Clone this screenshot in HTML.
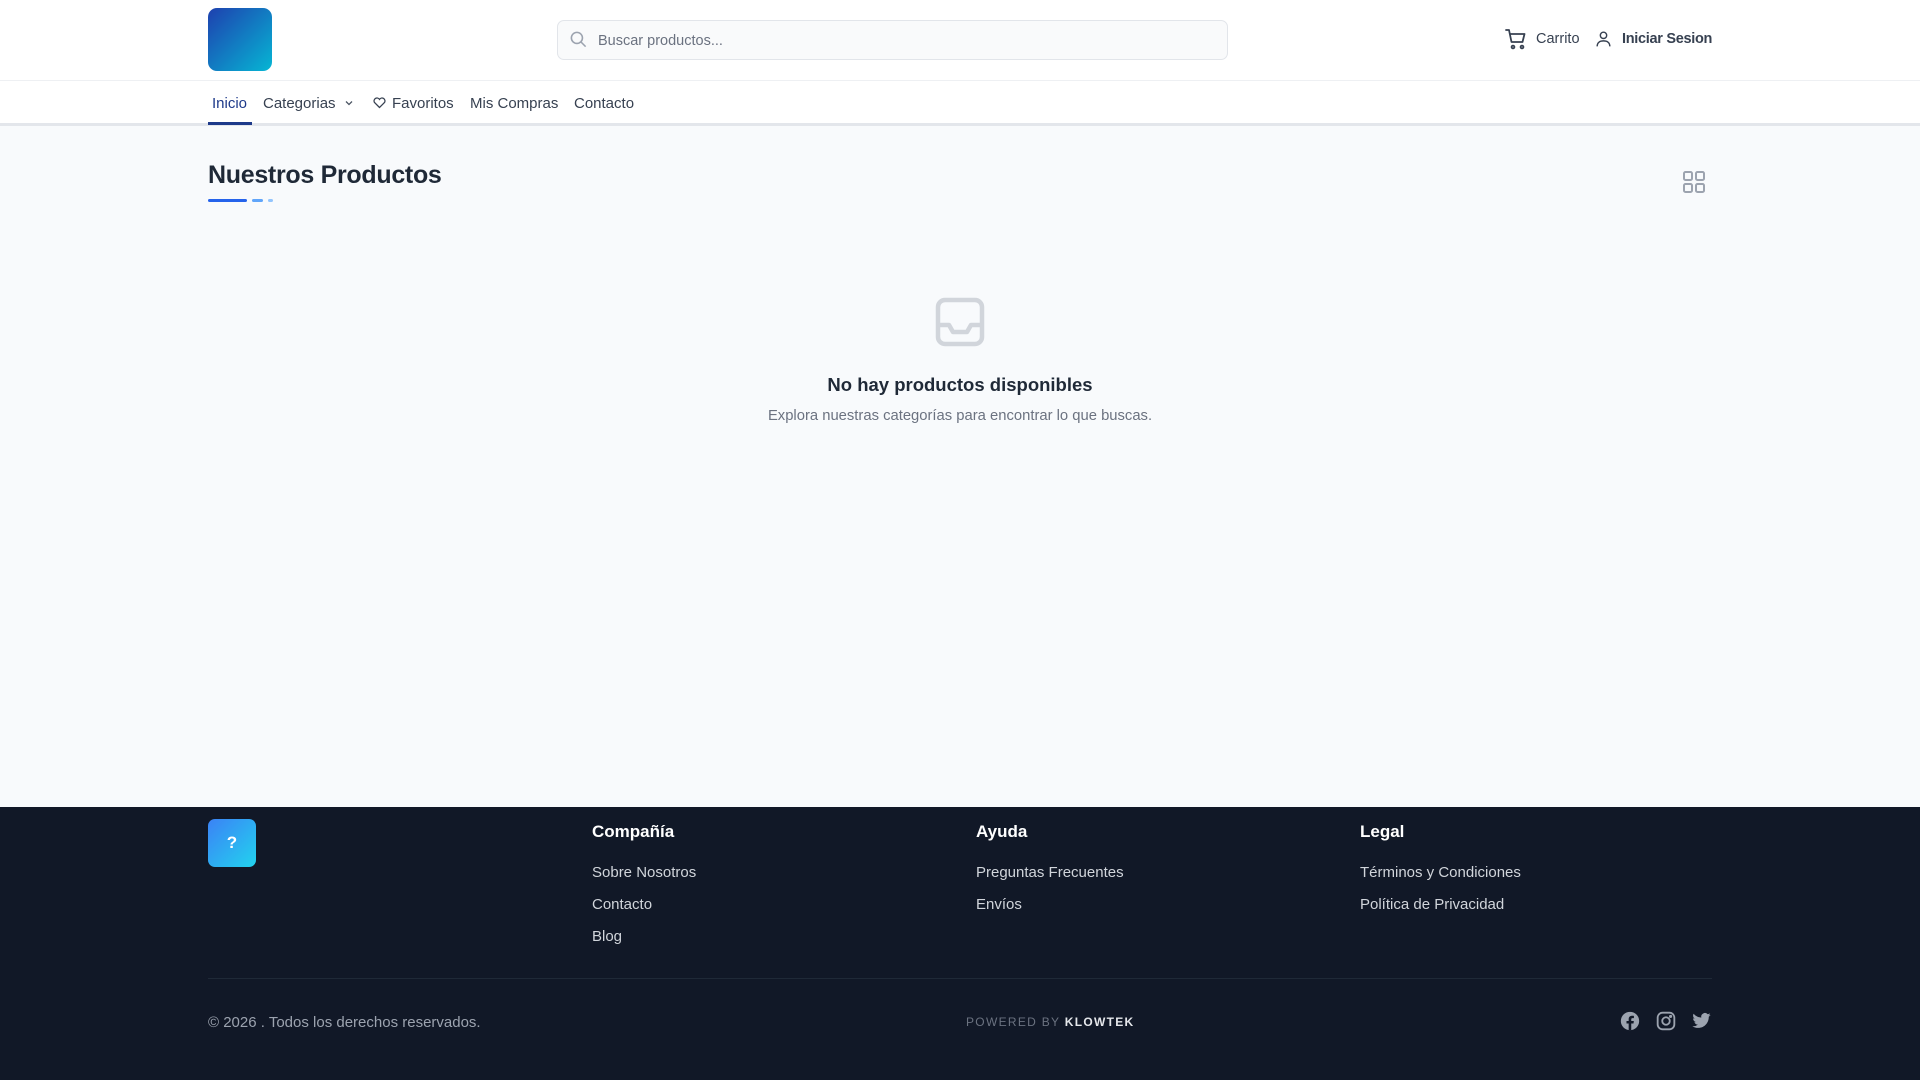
<!DOCTYPE html>
<html><head><meta charset="utf-8"><style>
*{box-sizing:border-box;margin:0;padding:0}
body{width:1920px;height:1080px;overflow:hidden;font-family:"Liberation Sans",sans-serif;background:#f8fafc;position:relative;color:#1f2937}
.abs{position:absolute}
header{position:absolute;left:0;top:0;width:1920px;height:81px;background:#fff;border-bottom:1px solid #eef0f3}
nav{position:absolute;left:0;top:81px;width:1920px;height:45px;background:#fff;border-bottom:3px solid #e3e6eb}
.nav{position:absolute;top:95px;font-size:15px;color:#374151}
footer{position:absolute;left:0;top:807px;width:1920px;height:273px;background:#111827}
.fh{position:absolute;top:822px;color:#fff;font-size:17px;font-weight:bold}
.fl{position:absolute;color:#d1d5db;font-size:15px}
</style></head><body>
<header>
<div class="abs" style="left:208px;top:8px;width:64px;height:63px;border-radius:9px;background:linear-gradient(135deg,#1e40af,#06b6d4)"></div>
<div class="abs" style="left:557px;top:20px;width:671px;height:40px;border:1px solid #e2e5ea;border-radius:7px;background:#f9fafb"></div>
<svg class="abs" style="left:569px;top:30px" width="19" height="19" viewBox="0 0 24 24" fill="none" stroke="#9ca3af" stroke-width="2"><circle cx="10" cy="10" r="7"/><path d="M15 15l6 6"/></svg>
<div class="abs" style="left:598px;top:33px;font-size:14.5px;color:#6b7280">Buscar productos...</div>
<svg class="abs" style="left:1504px;top:27px" width="24" height="24" viewBox="0 0 24 24" fill="none" stroke="#374151" stroke-width="1.8" stroke-linecap="round" stroke-linejoin="round"><path d="M2 3h3l2.5 12h11l2-8H6.5"/><circle cx="9" cy="20" r="1.4"/><circle cx="18" cy="20" r="1.4"/></svg>
<div class="abs" style="left:1536px;top:31px;font-size:14.5px;color:#374151">Carrito</div>
<svg class="abs" style="left:1594px;top:29px" width="19" height="19" viewBox="0 0 24 24" fill="none" stroke="#374151" stroke-width="1.8"><circle cx="12" cy="8" r="4"/><path d="M4 22c0-5 3.5-7 8-7s8 2 8 7"/></svg>
<div class="abs" style="left:1622px;top:31px;font-size:14.5px;color:#374151;font-weight:bold;letter-spacing:-0.3px">Iniciar Sesion</div>
</header>
<nav></nav>
<div class="nav" style="left:212px;color:#1e3a8a">Inicio</div>
<div class="abs" style="left:208px;top:122px;width:44px;height:3px;background:#1e3a8a"></div>
<div class="nav" style="left:263px">Categorias</div>
<svg class="abs" style="left:343px;top:97px" width="12" height="12" viewBox="0 0 24 24" fill="none" stroke="#4b5563" stroke-width="2.5"><path d="M6 9l6 6 6-6"/></svg>
<svg class="abs" style="left:372px;top:95px" width="15" height="15" viewBox="0 0 24 24" fill="none" stroke="#374151" stroke-width="2"><path d="M12 20l-8-8a4.5 4.5 0 0 1 8-5 4.5 4.5 0 0 1 8 5z"/></svg>
<div class="nav" style="left:392px">Favoritos</div>
<div class="nav" style="left:470px">Mis Compras</div>
<div class="nav" style="left:574px">Contacto</div>

<div class="abs" style="left:208px;top:161px;font-size:25px;font-weight:bold;color:#1f2937;letter-spacing:-0.3px">Nuestros Productos</div>
<div class="abs" style="left:208px;top:199px;width:39px;height:3px;background:#2563eb;border-radius:2px"></div>
<div class="abs" style="left:252px;top:199px;width:11px;height:3px;background:#60a5fa;border-radius:2px"></div>
<div class="abs" style="left:268px;top:199px;width:5px;height:3px;background:#93c5fd;border-radius:2px"></div>
<svg class="abs" style="left:1683px;top:171px" width="22" height="22" viewBox="0 0 22 22" fill="none" stroke="#9ca3af" stroke-width="2"><rect x="1" y="1" width="8" height="8" rx="1.5"/><rect x="13" y="1" width="8" height="8" rx="1.5"/><rect x="1" y="13" width="8" height="8" rx="1.5"/><rect x="13" y="13" width="8" height="8" rx="1.5"/></svg>

<svg class="abs" style="left:935px;top:297px" width="50" height="50" viewBox="0 0 50 50" fill="none" stroke="#d1d5db" stroke-width="4.5" stroke-linejoin="round"><rect x="3" y="3" width="44" height="44" rx="7"/><path d="M3 28h11l4 7h14l4-7h11"/></svg>
<div class="abs" style="left:0;width:1920px;text-align:center;top:374px;font-size:18.5px;font-weight:bold;color:#1f2937">No hay productos disponibles</div>
<div class="abs" style="left:0;width:1920px;text-align:center;top:408px;font-size:14.8px;color:#6b7280">Explora nuestras categorías para encontrar lo que buscas.</div>

<footer></footer>
<div class="abs" style="left:208px;top:819px;width:48px;height:48px;border-radius:7px;background:linear-gradient(135deg,#3b82f6,#22d3ee);color:#fff;font-weight:bold;font-size:17px;text-align:center;line-height:48px">?</div>
<div class="fh" style="left:592px">Compañía</div>
<div class="fh" style="left:976px">Ayuda</div>
<div class="fh" style="left:1360px">Legal</div>
<div class="fl" style="left:592px;top:864px">Sobre Nosotros</div>
<div class="fl" style="left:592px;top:896px">Contacto</div>
<div class="fl" style="left:592px;top:928px">Blog</div>
<div class="fl" style="left:976px;top:864px">Preguntas Frecuentes</div>
<div class="fl" style="left:976px;top:896px">Envíos</div>
<div class="fl" style="left:1360px;top:864px">Términos y Condiciones</div>
<div class="fl" style="left:1360px;top:896px">Política de Privacidad</div>
<div class="abs" style="left:208px;top:978px;width:1504px;height:1px;background:#1f2937"></div>
<div class="fl" style="left:208px;top:1014px;color:#9ca3af">© 2026 . Todos los derechos reservados.</div>
<div class="abs" style="left:966px;top:1015px;font-size:12px;letter-spacing:1.3px;color:#6b7280">POWERED BY <b style="color:#e5e7eb">KLOWTEK</b></div>
<svg class="abs" style="left:1620px;top:1011px" width="20" height="20" viewBox="0 0 24 24"><circle cx="12" cy="12" r="11" fill="#9ca3af"/><path d="M13.5 23v-8h2.7l.4-3h-3.1v-2c0-.9.3-1.5 1.6-1.5h1.6V5.8c-.3 0-1.3-.1-2.4-.1-2.3 0-3.9 1.4-3.9 4V12H7.8v3h2.6v8z" fill="#111827"/></svg>
<svg class="abs" style="left:1656px;top:1011px" width="20" height="20" viewBox="0 0 24 24" fill="none" stroke="#9ca3af" stroke-width="2.2"><rect x="2" y="2" width="20" height="20" rx="6"/><circle cx="12" cy="12" r="4.5"/><circle cx="17.5" cy="6.5" r="0.8" fill="#9ca3af"/></svg>
<svg class="abs" style="left:1691px;top:1011px" width="21" height="20" viewBox="0 0 24 24"><path fill="#9ca3af" d="M23 4.6c-.8.4-1.7.6-2.6.7.9-.6 1.6-1.4 2-2.5-.9.5-1.9.9-2.9 1.1A4.5 4.5 0 0 0 11.8 8 12.8 12.8 0 0 1 2.5 3.3a4.5 4.5 0 0 0 1.4 6 4.4 4.4 0 0 1-2-.6v.1c0 2.2 1.5 4 3.6 4.4a4.5 4.5 0 0 1-2 .1 4.5 4.5 0 0 0 4.2 3.1A9 9 0 0 1 1 18.3 12.8 12.8 0 0 0 7.9 20.3c8.3 0 12.8-6.9 12.8-12.8v-.6c.9-.6 1.7-1.4 2.3-2.3z"/></svg>
</body></html>
